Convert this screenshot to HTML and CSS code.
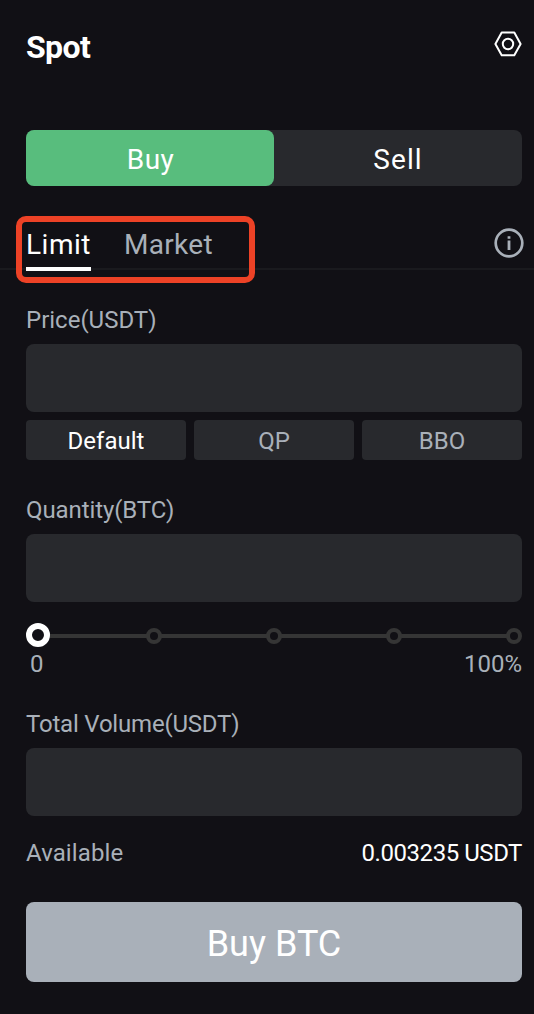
FILE: index.html
```
<!DOCTYPE html>
<html lang="en">
<head>
<meta charset="UTF-8">
<title>Spot</title>
<link rel="stylesheet" href="styles.css">
</head>
<body>
<div class="panel">
<div class="header">
<h1>Spot</h1>
<svg class="settings" width="28" height="28" viewBox="0 0 28 28" fill="none" stroke="#fff" stroke-width="2" stroke-linejoin="round">
<path d="M7.7 2.5H20.3L26.6 14L20.3 25.3H7.7L1.4 14Z"/>
<circle cx="14" cy="14" r="5.2"/>
</svg>
</div>

<div class="side">
<div class="side-btn buy">Buy</div>
<div class="side-btn sell">Sell</div>
</div>

<div class="tabs">
<div class="tab active">Limit</div>
<div class="tab">Market</div>
<svg class="info" width="30" height="30" viewBox="0 0 30 30">
<circle cx="15" cy="15" r="13.3" fill="none" stroke="#a9b0b9" stroke-width="2.7"/>
<path d="M13.6 12.4H16.4V22H13.6ZM13.6 8.2H16.4V10.8H13.6Z" fill="#a9b0b9"/>
</svg>
<div class="highlight"></div>
</div>

<!-- Order form -->
<div class="form">
<div class="label">Price(USDT)</div>
<div class="field"></div>
<div class="modes">
<div class="mode active">Default</div>
<div class="mode">QP</div>
<div class="mode">BBO</div>
</div>

<div class="label quantity">Quantity(BTC)</div>
<div class="field"></div>
<svg class="slider" width="496" height="24" viewBox="0 0 496 24" fill="#111015">
<path d="M12 13H488" stroke="#353535" stroke-width="4"/>
<g stroke="#353535" stroke-width="4">
<circle cx="128" cy="13" r="6"/>
<circle cx="248" cy="13" r="6"/>
<circle cx="368" cy="13" r="6"/>
<circle cx="488" cy="13" r="6"/>
</g>
<circle cx="12" cy="12" r="9" stroke="#fff" stroke-width="6"/>
</svg>
<div class="row scale"><span>0</span><span>100%</span></div>

<div class="label total">Total Volume(USDT)</div>
<div class="field"></div>
<div class="row available"><span>Available</span><span class="balance">0.003235 USDT</span></div>
<div class="submit">Buy BTC</div>
</div>
</div>
</body>
</html>
```
FILE: styles.css
```
* { box-sizing:border-box; }
body { margin:0; background:#111015; color:#fff; font-family:Roboto, "Liberation Sans", sans-serif; }
.panel { height:1014px; overflow:hidden; white-space:nowrap; }

.header { display:flex; justify-content:space-between; align-items:center; height:88px; padding:0 12px 0 26px; }
h1 { margin:6px 0 0; font-size:32px; line-height:40px; font-weight:700; letter-spacing:-0.6px; }
.settings { display:block; }

.side { display:flex; margin:42px 12px 0 26px; height:56px; background:#28292d; border-radius:8px; }
.side-btn { width:50%; display:flex; justify-content:center; align-items:center; padding-top:4px; font-size:28px; line-height:32px; border-radius:8px; }
.buy { padding-left:1px; background:#58bd7d; letter-spacing:0.4px; }
.sell { letter-spacing:1.1px; }

.tabs { position:relative; display:flex; align-items:flex-start; height:84px; padding:42px 10px 0 26px; background:linear-gradient(#1a1a1e,#1a1a1e) 0 82px / 100% 2px no-repeat; font-size:28px; line-height:34px; }
.tab { height:43px; margin-right:33px; color:#a9b0b9; letter-spacing:0.3px; }
.tab.active { color:#fff; width:65px; border-bottom:4px solid #fff; letter-spacing:0.5px; }
.info { display:block; margin-left:auto; }
.highlight { position:absolute; left:16px; top:30px; width:239px; height:67px; border:6px solid #ed4226; border-radius:10px; }

.form { padding:38px 12px 0 26px; font-size:24px; line-height:24px; }
.label { height:24px; margin-bottom:12px; color:#a9b0b9; }
.field { height:68px; background:#28292d; border-radius:8px; }
.modes { display:grid; grid-template-columns:repeat(3, 1fr); gap:8px; margin-top:8px; }
.mode { display:flex; justify-content:center; align-items:center; height:40px; padding-top:2px; background:#28292d; border-radius:4px; color:#a9b0b9; }
.mode.active { color:#fff; }
.quantity { margin-top:38px; letter-spacing:-0.1px; }
.slider { display:block; margin-top:21px; }
.row { display:flex; justify-content:space-between; color:#a9b0b9; }
.scale { margin-top:5px; padding-left:4px; }
.total { margin-top:36px; letter-spacing:-0.2px; }
.available { margin-top:25px; letter-spacing:0.1px; }
.balance { color:#fff; letter-spacing:-0.45px; }
.submit { display:flex; justify-content:center; align-items:center; height:80px; padding-top:4px; margin-top:37px; background:#a9b0b9; border-radius:8px; font-size:36px; line-height:44px; }
```
